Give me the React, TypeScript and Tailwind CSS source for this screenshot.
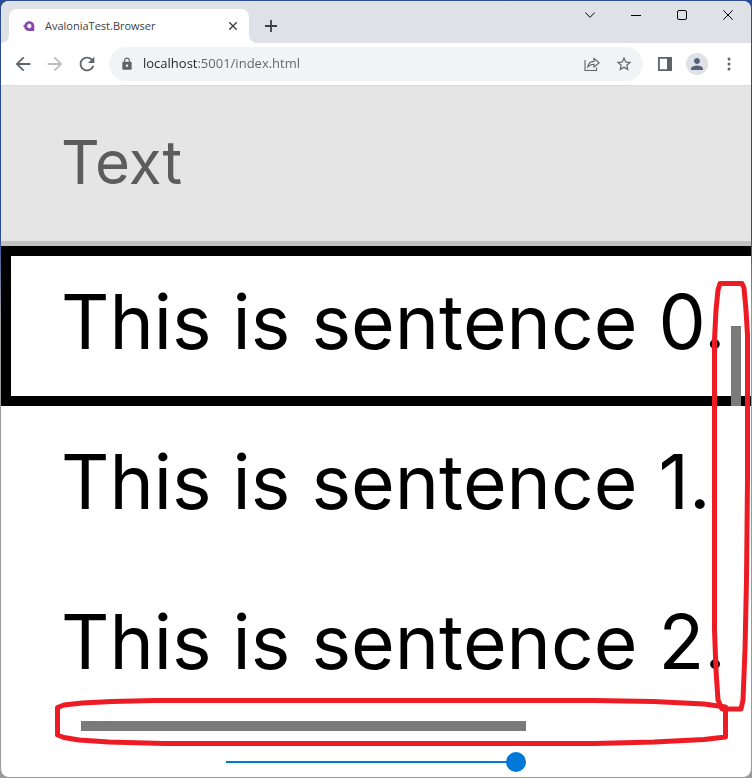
import { useState } from "react";
import { MdArrowBack, MdArrowForward, MdLock, MdPerson, MdRefresh, MdStarOutline } from "react-icons/md";

const ROWS = ["This is sentence 0.", "This is sentence 1.", "This is sentence 2."];

function Favicon() {
  return (
    <svg viewBox="0 0 12 12" className="size-3 shrink-0" aria-hidden="true">
      <path
        fill="#8b44ac"
        d="M6.300 1.200a5 5 0 0 1 5 4.800v4c0 .8-.5 1.100-1.200 1.100H6.300c-3 0-4.900-2-5.100-4.300-.8-.2-1-.5-1-.8s.3-.6 1.100-.8C1.700 3 3.800 1.200 6.300 1.200Z"
      />
      <circle cx="6.300" cy="6.100" r="2.500" fill="#fff" stroke="#5a2a7a" strokeWidth=".5" />
    </svg>
  );
}

function TabStrip() {
  return (
    <div className="flex h-[42px] items-end bg-[#dee1e6]">
      <div className="h-2 w-2 shrink-0 bg-white">
        <div className="size-2 rounded-br-lg bg-[#dee1e6]" />
      </div>
      <div className="flex h-[34px] w-60 items-center rounded-t-lg bg-white pr-2 pl-[14px]">
        <Favicon />
        <span className="ml-[10px] flex-1 truncate text-[11px] text-[#3c4043]">AvaloniaTest.Browser</span>
        <button aria-label="Close tab" className="grid size-4 place-items-center text-[#3c4043]">
          <svg viewBox="0 0 8 8" className="size-2" stroke="currentColor" strokeWidth="1.400">
            <path d="M.2 .2l7.600 7.600M7.800 .2L.2 7.800" />
          </svg>
        </button>
      </div>
      <div className="h-2 w-2 shrink-0 bg-white">
        <div className="size-2 rounded-bl-lg bg-[#dee1e6]" />
      </div>
      <button aria-label="New tab" className="mb-[11px] ml-2 grid size-3 place-items-center text-[#3c4043]">
        <svg viewBox="0 0 12 12" className="size-3" stroke="currentColor" strokeWidth="1.800">
          <path d="M6 0v12M0 6h12" />
        </svg>
      </button>
      <div className="ml-auto flex h-7 self-start text-black">
        <button aria-label="Search tabs" className="grid w-[46px] place-items-center">
          <svg viewBox="0 0 10 10" className="size-[10px]" fill="none" stroke="currentColor">
            <path d="M.3 2.500L5 7.300l4.700-4.800" />
          </svg>
        </button>
        <button aria-label="Minimize" className="grid w-[46px] place-items-center">
          <svg viewBox="0 0 10 10" className="size-[10px]" stroke="currentColor">
            <path d="M0 5.500h10" />
          </svg>
        </button>
        <button aria-label="Maximize" className="grid w-[46px] place-items-center">
          <svg viewBox="0 0 10 10" className="size-[10px]" fill="none" stroke="currentColor">
            <rect x=".5" y=".5" width="9" height="9" rx="1.500" />
          </svg>
        </button>
        <button aria-label="Close" className="grid w-[46px] place-items-center">
          <svg viewBox="0 0 10 10" className="size-[10px]" stroke="currentColor">
            <path d="M.3 .3l9.400 9.400M9.700 .3L.3 9.700" />
          </svg>
        </button>
      </div>
    </div>
  );
}

function Toolbar() {
  return (
    <div className="flex h-[43px] items-center border-b border-[#dadce0] bg-white pr-[14px] pl-[11px] text-[#5f6368]">
      <div className="flex gap-[10px]">
        <button aria-label="Back">
          <MdArrowBack size={22} />
        </button>
        <button aria-label="Forward" className="text-[#babcbe]">
          <MdArrowForward size={22} />
        </button>
        <button aria-label="Reload">
          <MdRefresh size={22} />
        </button>
      </div>
      <div className="ml-[11px] flex h-[34px] flex-1 items-center rounded-full bg-[#f1f3f4] pr-[10px] pl-[11px]">
        <MdLock size={14} />
        <input
          aria-label="Address"
          defaultValue="localhost:5001/index.html"
          className="ml-[9px] min-w-0 flex-1 bg-linear-to-r from-[#202124] from-[55px] to-[#5f6368] to-[55px] bg-clip-text text-[13px] text-transparent outline-none"
        />
        <button aria-label="Share">
          <svg viewBox="0 0 16 16" className="size-4" fill="none" stroke="currentColor" strokeWidth="1.100">
            <path d="M1 4v10.500h11.500v-3M3.800 11c.5-3.600 2.700-5.500 6.200-5.600V2.500l5.200 4.300-5.200 4.200V8.200C7.300 8.200 5.400 9 3.800 11Z" />
          </svg>
        </button>
        <button aria-label="Bookmark" className="ml-[15px]">
          <MdStarOutline size={18} />
        </button>
      </div>
      <button aria-label="Side panel" className="ml-[15px]">
        <svg viewBox="0 0 14 14" className="size-[14px]" fill="none" stroke="currentColor" strokeWidth="1.800">
          <path d="M.9 .9h12.200v12.200H.9Z" />
          <path d="M9 0h5v14H9Z" fill="currentColor" stroke="none" />
        </svg>
      </button>
      <button aria-label="Profile" className="ml-[14px] grid size-[22px] place-items-center rounded-full bg-[#dee1e6] text-[#56637a]">
        <MdPerson size={18} />
      </button>
      <button aria-label="Menu" className="ml-[13px] grid size-4 place-items-center">
        <svg viewBox="0 0 4 14" className="h-[14px] w-1" fill="currentColor">
          <circle cx="2" cy="2" r="1.500" />
          <circle cx="2" cy="7" r="1.500" />
          <circle cx="2" cy="12" r="1.500" />
        </svg>
      </button>
    </div>
  );
}

function DataGrid() {
  const [selected, setSelected] = useState(0);

  return (
    <div className="relative overflow-hidden pb-[10px] font-[Inter,sans-serif]">
      <table className="w-full border-collapse text-left whitespace-nowrap">
        <thead>
          <tr>
            <th className="block h-40 border-b-[5px] border-[#c1c1c1] bg-[#e5e5e5] pl-[60px] text-[60px] leading-[153px] font-normal text-[#5c5c5c]">
              Text
            </th>
          </tr>
        </thead>
        <tbody>
          {ROWS.map((text, i) => (
            <tr key={text} onClick={() => setSelected(i)}>
              <td
                className={
                  i === selected
                    ? "block h-40 border-y-[10px] border-l-[10px] border-black pl-[50px] text-[75px] leading-[132px]"
                    : "block h-40 border-y-[10px] border-transparent pl-[60px] text-[75px] leading-[132px]"
                }
              >
                {text}
              </td>
            </tr>
          ))}
        </tbody>
      </table>
      <div className="absolute top-60 right-[10px] h-20 w-[10px] bg-[#7a7a7a]" />
      <div className="absolute bottom-[5px] left-20 h-[10px] w-[445px] bg-[#7a7a7a]" />
    </div>
  );
}

// hand drawn red rings around both scroll bars
function Markup() {
  return (
    <>
      <svg
        viewBox="0 0 38 432"
        className="pointer-events-none absolute top-[280px] right-[2px] h-[432px] w-[38px]"
        fill="none"
        stroke="#ed1c24"
        strokeWidth="5"
        strokeLinejoin="round"
      >
        <path d="M8 3.500H30L32 8 34 30 35.500 55V200L34.500 300 33 370 31 420 29 429H10L6 420 4 390 2.500 350V60L4 30 6 10Z" />
      </svg>
      <svg
        viewBox="0 0 674 48"
        preserveAspectRatio="none"
        className="pointer-events-none absolute right-[24px] bottom-[32px] left-[54px] h-12 w-[calc(100%-78px)]"
        fill="none"
        stroke="#ed1c24"
        strokeWidth="5"
        strokeLinejoin="round"
      >
        <path d="M3.500 9.500L10 7 28 5 58 3.500 100 2.500H540L600 3.500 650 6 671.500 9V39L650 41.500 600 44 540 45.500H110L55 44 25 42 10 39.500 3.500 37Z" />
      </svg>
    </>
  );
}

export default function App() {
  const [zoom, setZoom] = useState(100);

  return (
    <main className="relative bg-linear-to-b from-[#2b4b97] from-30% to-[#9a9a9e] to-40% p-px font-['Open_Sans','Noto_Sans',sans-serif]">
      <div className="overflow-hidden rounded-lg bg-white">
        <TabStrip />
        <Toolbar />
        <DataGrid />
        <div className="flex justify-center pt-4 pb-[5px]">
          <input
            type="range"
            aria-label="Zoom"
            min={0}
            max={100}
            value={zoom}
            onChange={(e) => setZoom(Number(e.target.value))}
            className="h-5 w-[300px] appearance-none bg-linear-to-r from-[#0078d7] to-[#0078d7] bg-[length:100%_2px] bg-center bg-no-repeat outline-none [&::-webkit-slider-thumb]:size-5 [&::-webkit-slider-thumb]:appearance-none [&::-webkit-slider-thumb]:rounded-full [&::-webkit-slider-thumb]:bg-[#0078d7]"
          />
        </div>
      </div>
      <Markup />
    </main>
  );
}
